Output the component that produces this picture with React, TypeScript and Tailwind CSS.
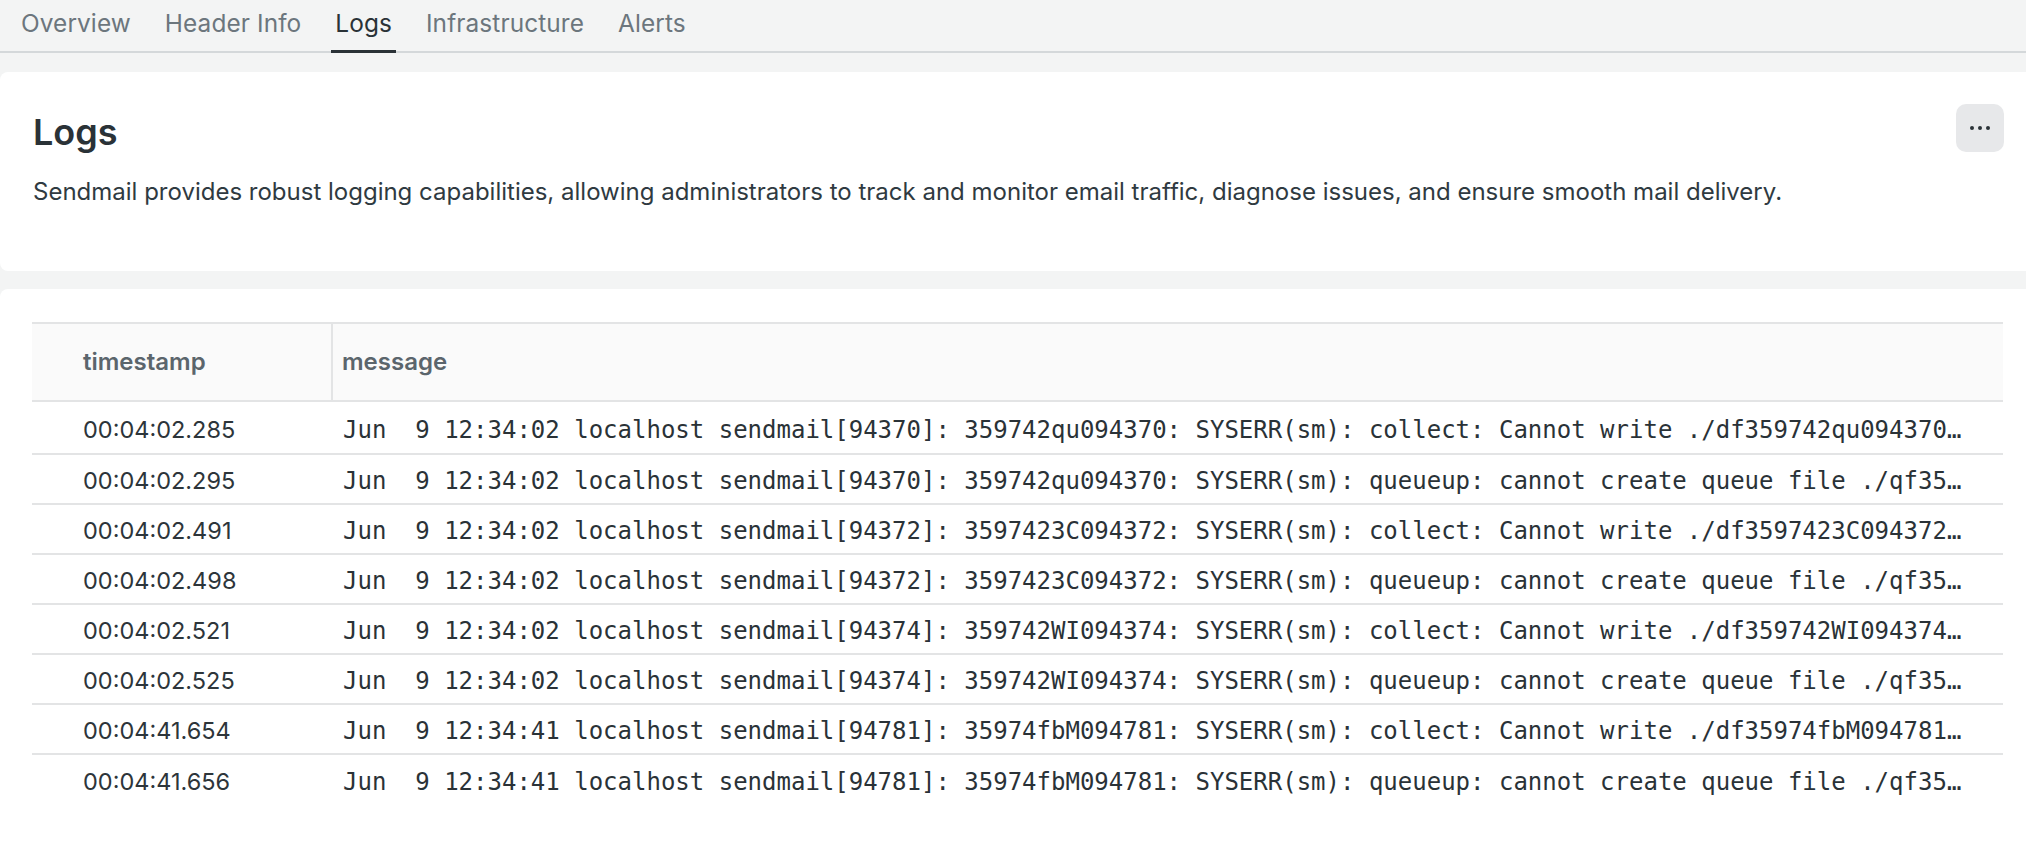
import React from "react";

const tabs = ["Overview", "Header Info", "Logs", "Infrastructure", "Alerts"];

const rows: [string, string][] = [
  ["00:04:02.285", "Jun  9 12:34:02 localhost sendmail[94370]: 359742qu094370: SYSERR(sm): collect: Cannot write ./df359742qu094370 (bfcommit, uid=0, gid=0): Permission denied"],
  ["00:04:02.295", "Jun  9 12:34:02 localhost sendmail[94370]: 359742qu094370: SYSERR(sm): queueup: cannot create queue file ./qf359742qu094370, euid=0, fd=-1, fp=0x0: Permission denied"],
  ["00:04:02.491", "Jun  9 12:34:02 localhost sendmail[94372]: 3597423C094372: SYSERR(sm): collect: Cannot write ./df3597423C094372 (bfcommit, uid=0, gid=0): Permission denied"],
  ["00:04:02.498", "Jun  9 12:34:02 localhost sendmail[94372]: 3597423C094372: SYSERR(sm): queueup: cannot create queue file ./qf3597423C094372, euid=0, fd=-1, fp=0x0: Permission denied"],
  ["00:04:02.521", "Jun  9 12:34:02 localhost sendmail[94374]: 359742WI094374: SYSERR(sm): collect: Cannot write ./df359742WI094374 (bfcommit, uid=0, gid=0): Permission denied"],
  ["00:04:02.525", "Jun  9 12:34:02 localhost sendmail[94374]: 359742WI094374: SYSERR(sm): queueup: cannot create queue file ./qf359742WI094374, euid=0, fd=-1, fp=0x0: Permission denied"],
  ["00:04:41.654", "Jun  9 12:34:41 localhost sendmail[94781]: 35974fbM094781: SYSERR(sm): collect: Cannot write ./df35974fbM094781 (bfcommit, uid=0, gid=0): Permission denied"],
  ["00:04:41.656", "Jun  9 12:34:41 localhost sendmail[94781]: 35974fbM094781: SYSERR(sm): queueup: cannot create queue file ./qf35974fbM094781, euid=0, fd=-1, fp=0x0: Permission denied"],
];

export default function App() {
  return (
    <div className="min-h-[850px] overflow-hidden bg-[#f3f4f4] font-['Inter',sans-serif]">
      <nav className="flex h-[53px] items-stretch gap-[26px] border-b-2 border-[#d4d8da] pl-[17px]">
        {tabs.map((t) => (
          <div
            key={t}
            className={
              "relative flex items-center px-[4px] pb-[4px] text-[24.4px] tracking-[0.1px] " +
              (t === "Logs" ? "text-[#2a3237]" : "text-[#6c767d]")
            }
          >
            {t}
            {t === "Logs" && (
              <span className="absolute bottom-[-2px] left-0 right-0 h-[3px] bg-[#2a3237]" />
            )}
          </div>
        ))}
      </nav>

      <section className="mt-[19px] flex h-[199px] items-start justify-between rounded-l-[8px] bg-white pl-[33px] pr-[22px] pt-[32px]">
        <div>
          <h1 className="mt-[6px] text-[36px] font-semibold leading-[44px] text-[#2a3237]">Logs</h1>
          <p className="mt-[22px] text-[24px] leading-[32px] text-[#2f3a41]">
            Sendmail provides robust logging capabilities, allowing administrators to track and monitor email traffic, diagnose issues, and ensure smooth mail delivery.
          </p>
        </div>
        <button className="flex h-[48px] w-[48px] shrink-0 items-center justify-center gap-[4px] rounded-[10px] bg-[#e7e8ea]">
          <span className="h-[4px] w-[4px] rounded-full bg-[#2b3338]" />
          <span className="h-[4px] w-[4px] rounded-full bg-[#2b3338]" />
          <span className="h-[4px] w-[4px] rounded-full bg-[#2b3338]" />
        </button>
      </section>

      <section className="mt-[18px] min-h-[600px] rounded-l-[8px] bg-white pl-[32px] pr-[23px] pt-[33px]">
        <div className="border-t-2 border-[#e3e4e5]">
          <div className="flex h-[78px] border-b-2 border-[#e3e4e5] bg-[#fafafa] text-[24px] font-semibold text-[#5b656c]">
            <div className="flex w-[299px] shrink-0 items-center pl-[51px]">timestamp</div>
            <div className="w-[2px] bg-[#e3e4e5]" />
            <div className="flex flex-1 items-center pl-[9px]">message</div>
          </div>
          {rows.map(([ts, msg], i) => (
            <div
              key={i}
              className={
                "flex items-center " +
                (i === 0 ? "h-[53px] pt-[4px] " : "h-[50px] pt-[3px] ") +
                (i < rows.length - 1 ? "border-b-2 border-[#e3e4e5]" : "")
              }
            >
              <div className="w-[299px] shrink-0 pl-[51px] text-[23.5px] text-[#2d353a]">{ts}</div>
              <div className="min-w-0 flex-1 truncate whitespace-pre pl-[12px] pr-[33px] font-['DejaVu_Sans_Mono',monospace] text-[24px] text-[#2a3237]">
                {msg}
              </div>
            </div>
          ))}
        </div>
      </section>
    </div>
  );
}
